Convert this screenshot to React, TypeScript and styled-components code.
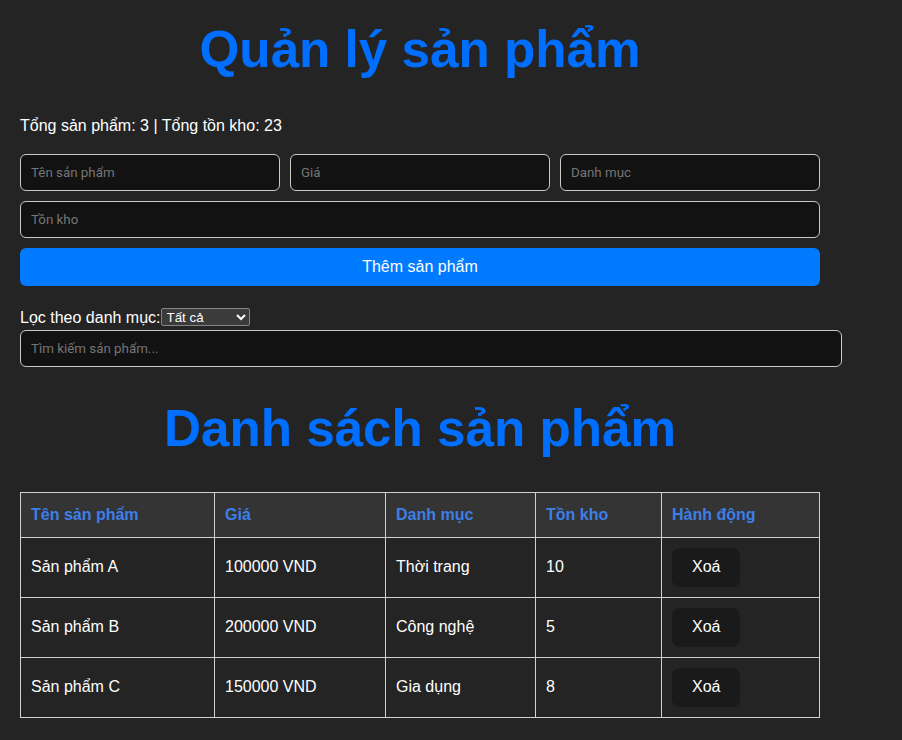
import React, { useState } from 'react'
import styled, { createGlobalStyle } from 'styled-components'

const GlobalStyle = createGlobalStyle`
    :root {
        color-scheme: dark;
    }
    body {
        margin: 0;
        background: #242424;
        color: #fff;
        font-family: "Liberation Sans", Arial, sans-serif;
        font-size: 16px;
        line-height: 1.5;
    }
`

const Page = styled.div`
    width: 800px;
    padding: 22px 20px 20px;
`

const Title = styled.h1`
    margin: 0 0 36px;
    font-size: 51.2px;
    line-height: 1.1;
    font-weight: 700;
    color: #006eff;
    text-align: center;
`

const SubTitle = styled(Title).attrs({ as: 'h2' })`
    margin: 34px 0;
`

const Stats = styled.p`
    margin: 0 0 16px;
`

const Form = styled.div`
    display: grid;
    grid-template-columns: repeat(3, 1fr);
    gap: 10px;
`

const Field = styled.input<{ $wide?: boolean }>`
    grid-column: ${(p) => (p.$wide ? '1 / -1' : 'auto')};
    box-sizing: border-box;
    width: 100%;
    height: 37px;
    padding: 10px;
    border: 1px solid #c8c8c8;
    border-radius: 6px;
    background: #121212;
    color: #fff;
    font-family: Roboto, "Liberation Sans", sans-serif;
    font-size: 13.33px;
    outline: none;

    &::placeholder {
        color: #757575;
    }
`

const AddButton = styled.button`
    grid-column: 1 / -1;
    height: 38px;
    border: none;
    border-radius: 6px;
    background: #007bff;
    color: #fff;
    font-family: "Liberation Sans", Arial, sans-serif;
    font-size: 16px;
    cursor: pointer;
`

const FilterRow = styled.div`
    margin-top: 20px;
    line-height: 24px;
`

const Select = styled.select`
    width: 89px;
    height: 18px;
    padding: 0 1px;
    border: 1px solid #858585;
    border-radius: 2px;
    background: #3b3b3b;
    color: #fff;
    font-family: "Liberation Sans", Arial, sans-serif;
    font-size: 13.33px;
    vertical-align: 1px;
`

const SearchInput = styled.input`
    display: block;
    width: 100%;
    padding: 10px;
    height: 15px;
    border: 1px solid #c8c8c8;
    border-radius: 6px;
    background: #121212;
    color: #fff;
    font-family: Roboto, "Liberation Sans", sans-serif;
    font-size: 13.33px;
    outline: none;

    &::placeholder {
        color: #757575;
    }
`

const Table = styled.table`
    width: 799px;
    border-collapse: collapse;
    table-layout: fixed;
`

const HeadCell = styled.th<{ $w: number }>`
    width: ${(p) => p.$w}px;
    height: 45px;
    box-sizing: border-box;
    padding: 0 10px;
    border: 1px solid #d0d0d0;
    background: #343434;
    color: #3d7fe8;
    font-weight: 700;
    text-align: left;
`

const Cell = styled.td`
    height: 60px;
    box-sizing: border-box;
    padding: 0 10px;
    border: 1px solid #d0d0d0;
    vertical-align: middle;
`

const DeleteButton = styled.button`
    height: 39px;
    padding: 0 19px;
    border: 1px solid transparent;
    border-radius: 8px;
    background: #1a1a1a;
    color: #fff;
    font-family: "Liberation Sans", Arial, sans-serif;
    font-size: 16px;
    cursor: pointer;
`

type Product = { id: number; name: string; price: number; category: string; stock: number }

const initial: Product[] = [
    { id: 1, name: 'Sản phẩm A', price: 100000, category: 'Thời trang', stock: 10 },
    { id: 2, name: 'Sản phẩm B', price: 200000, category: 'Công nghệ', stock: 5 },
    { id: 3, name: 'Sản phẩm C', price: 150000, category: 'Gia dụng', stock: 8 },
]

const columns = [
    { label: 'Tên sản phẩm', w: 194 },
    { label: 'Giá', w: 171 },
    { label: 'Danh mục', w: 150 },
    { label: 'Tồn kho', w: 126 },
    { label: 'Hành động', w: 158 },
]

export default function App() {
    const [products, setProducts] = useState(initial)
    const [filter, setFilter] = useState('all')
    const [search, setSearch] = useState('')

    const total = products.reduce((s, p) => s + p.stock, 0)
    const shown = products.filter(
        (p) =>
            (filter === 'all' || p.category === filter) &&
            p.name.toLowerCase().includes(search.toLowerCase())
    )

    return (
        <Page>
            <GlobalStyle />
            <Title>Quản lý sản phẩm</Title>
            <Stats>
                Tổng sản phẩm: {products.length} | Tổng tồn kho: {total}
            </Stats>
            <Form>
                <Field placeholder="Tên sản phẩm" />
                <Field placeholder="Giá" />
                <Field placeholder="Danh mục" />
                <Field $wide placeholder="Tồn kho" />
                <AddButton>Thêm sản phẩm</AddButton>
            </Form>
            <FilterRow>
                Lọc theo danh mục:
                <Select value={filter} onChange={(e) => setFilter(e.target.value)}>
                    <option value="all">Tất cả</option>
                    <option value="Thời trang">Thời trang</option>
                    <option value="Công nghệ">Công nghệ</option>
                    <option value="Gia dụng">Gia dụng</option>
                </Select>
            </FilterRow>
            <SearchInput
                placeholder="Tìm kiếm sản phẩm..."
                value={search}
                onChange={(e) => setSearch(e.target.value)}
            />
            <SubTitle>Danh sách sản phẩm</SubTitle>
            <Table>
                <thead>
                    <tr>
                        {columns.map((c) => (
                            <HeadCell key={c.label} $w={c.w}>
                                {c.label}
                            </HeadCell>
                        ))}
                    </tr>
                </thead>
                <tbody>
                    {shown.map((p) => (
                        <tr key={p.id}>
                            <Cell>{p.name}</Cell>
                            <Cell>{p.price} VND</Cell>
                            <Cell>{p.category}</Cell>
                            <Cell>{p.stock}</Cell>
                            <Cell>
                                <DeleteButton onClick={() => setProducts(products.filter((x) => x.id !== p.id))}>
                                    Xoá
                                </DeleteButton>
                            </Cell>
                        </tr>
                    ))}
                </tbody>
            </Table>
        </Page>
    )
}
